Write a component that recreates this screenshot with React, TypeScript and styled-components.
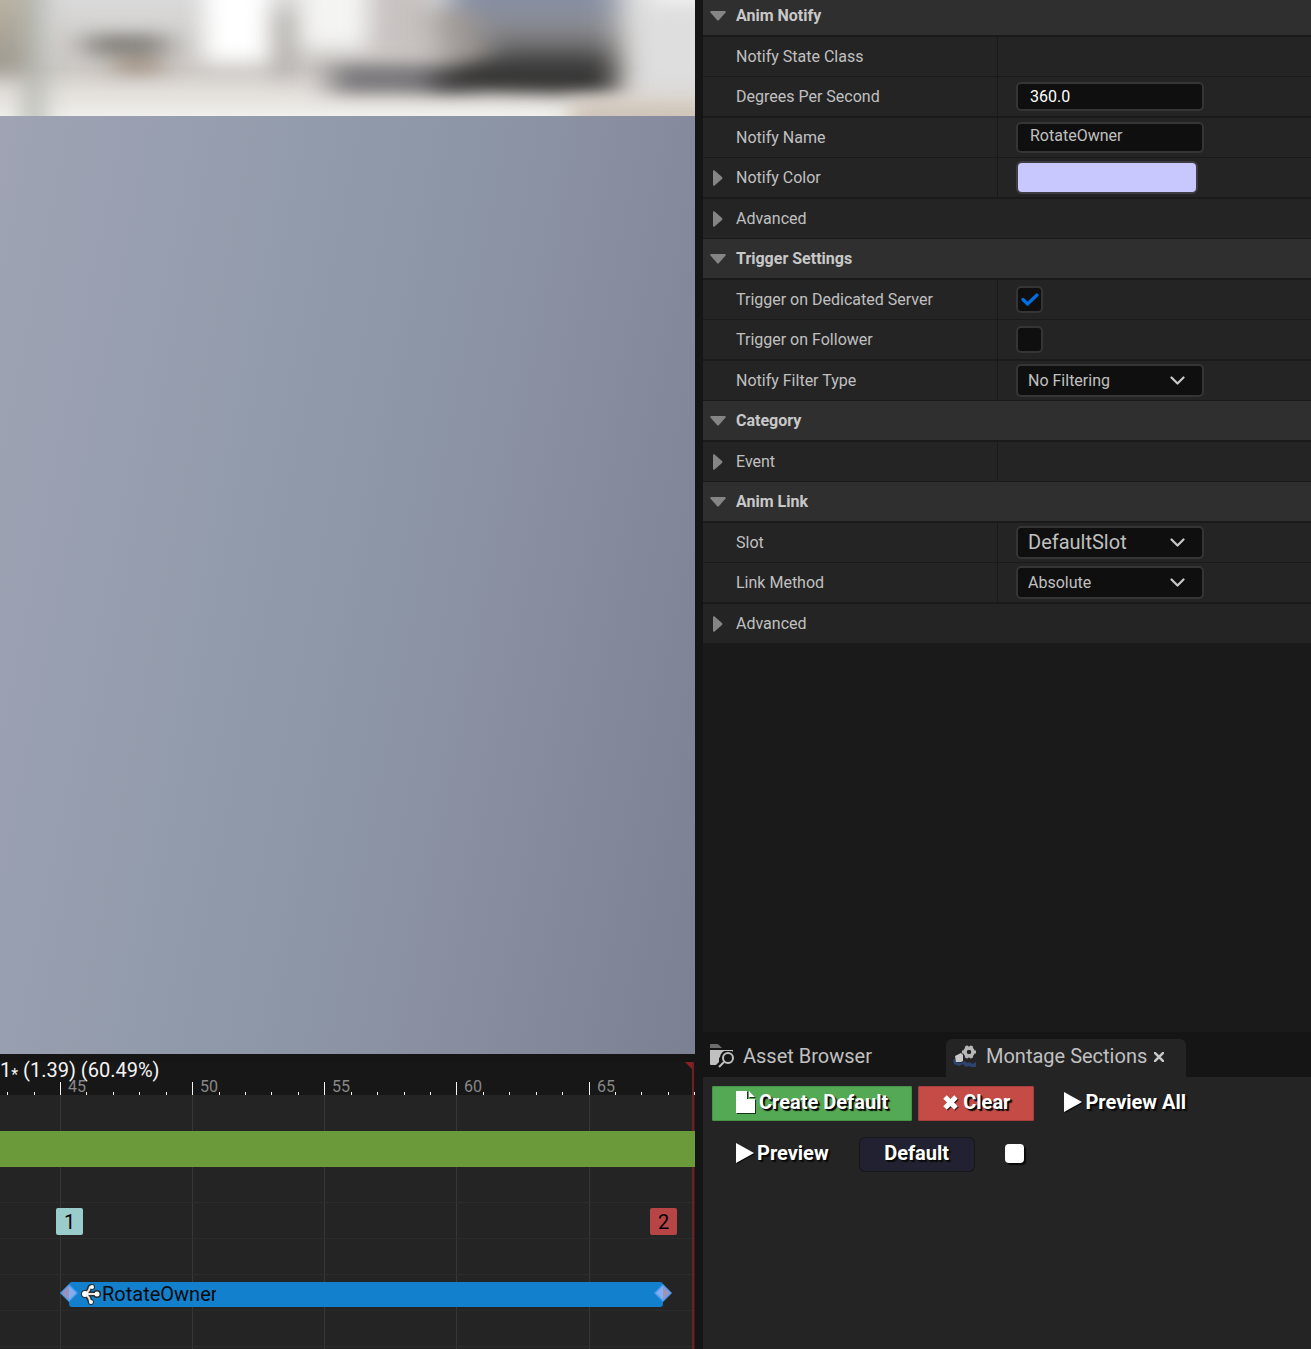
import React, { useId } from "react";
import styled, { createGlobalStyle, css } from "styled-components";

const color = {
  window: "#151515",
  well: "#1a1a1a",
  panel: "#242424",
  header: "#2f2f2f",
  field: "#0f0f0f",
  outline: "#353535",
  text: "#c0c0c0",
};

const GlobalStyle = createGlobalStyle`
  * { box-sizing: border-box; }
  body { margin: 0; background: ${color.window}; }
  body, button, input, select { font-family: Roboto, "Liberation Sans", sans-serif; }
  button { border: 0; margin: 0; padding: 0; background: none; color: inherit; font-size: inherit; cursor: pointer; }
  svg { display: block; flex: none; }
`;

const Editor = styled.main`
  display: grid;
  grid-template-columns: minmax(0, 1fr) 608px;
  column-gap: 8px;
  min-height: 100vh;
  color: ${color.text};
`;

const Column = styled.div`
  display: flex;
  flex-direction: column;
  min-width: 0;
`;

/* ---------- viewport ---------- */

const Viewport = styled.section`
  flex: 1;
  display: flex;
  flex-direction: column;
`;

const Horizon = styled.svg`
  width: 100%;
  height: 116px;
`;

const Floor = styled.div`
  flex: 1;
  background: linear-gradient(101deg, #9fa3b4 0%, #989fb0 20%, #8e98a8 48%, #898fa1 70%, #7b8093 100%);
`;

function Backdrop() {
  return (
    <Horizon viewBox="0 0 695 116" preserveAspectRatio="none" aria-hidden="true">
      <defs>
        <filter id="soft" colorInterpolationFilters="sRGB" filterUnits="userSpaceOnUse" x="-80" y="-80" width="860" height="280">
          <feGaussianBlur stdDeviation="12 10" />
        </filter>
        <filter id="softer" colorInterpolationFilters="sRGB" filterUnits="userSpaceOnUse" x="-80" y="-80" width="860" height="280">
          <feGaussianBlur stdDeviation="16 8" />
        </filter>
        <linearGradient id="ground" x1="0" y1="0" x2="0" y2="1">
          <stop offset="0" stopColor="#d9d9d9" />
          <stop offset="0.6" stopColor="#cdc9c5" />
          <stop offset="0.8" stopColor="#e3dfdb" />
          <stop offset="1" stopColor="#f0efeb" />
        </linearGradient>
        <linearGradient id="vehicle" gradientUnits="userSpaceOnUse" x1="0" y1="0" x2="0" y2="90">
          <stop offset="0" stopColor="#878fa3" />
          <stop offset="0.3" stopColor="#8a8b91" />
          <stop offset="0.52" stopColor="#6c6b6c" />
          <stop offset="0.72" stopColor="#3c3c3c" />
          <stop offset="1" stopColor="#343332" />
        </linearGradient>
        <linearGradient id="post" x1="0" y1="0" x2="0" y2="1">
          <stop offset="0" stopColor="#d0c9b4" />
          <stop offset="1" stopColor="#9b958c" />
        </linearGradient>
      </defs>
      <rect width="695" height="116" fill="url(#ground)" />
      <g filter="url(#soft)">
        <rect x="-80" y="-60" width="106" height="134" fill="url(#post)" />
        <rect x="24" y="-60" width="20" height="240" fill="#b4b7b0" />
        <rect x="204" y="-60" width="66" height="122" fill="#ffffff" />
        <rect x="274" y="10" width="20" height="66" fill="#b0aca8" />
        <rect x="300" y="-60" width="66" height="108" fill="#f4f4f2" />
        <rect x="374" y="-60" width="56" height="118" fill="#c8c2c1" />
      </g>
      <g filter="url(#softer)">
        <rect x="86" y="34" width="80" height="22" fill="#85827d" />
        <rect x="116" y="58" width="44" height="16" fill="#a09080" />
        <rect x="330" y="64" width="140" height="30" fill="#7c797d" />
      </g>
      <g filter="url(#softer)">
        <path d="M448-60H618V94H560L480 92L430 88L450 50Z" fill="url(#vehicle)" />
        <path d="M430 10H470L490 56L440 70Z" fill="#a09a96" />
      </g>
      <g filter="url(#soft)">
        <rect x="636" y="-60" width="140" height="150" fill="#dededf" />
        <rect x="650" y="-60" width="120" height="62" fill="#f6f6f7" />
        <rect x="570" y="100" width="220" height="40" fill="#cdc2b6" />
      </g>
    </Horizon>
  );
}

/* ---------- timeline ---------- */

const PX_PER_FRAME = 26.43;
const frameToX = (frame: number) => Math.round(60 + (frame - 45) * PX_PER_FRAME);

const TimelinePanel = styled.section`
  position: relative;
  overflow: hidden;
  padding: 8px 0 2px;
  background: linear-gradient(${color.window} 8px, ${color.panel} 8px);
`;

const Ruler = styled.div`
  position: relative;
  height: 33px;
  background: #171717;
`;

const Scrub = styled.output`
  display: block;
  font-size: 20px;
  line-height: 16px;
  color: #f4f4f4;
`;

const Star = styled.span`
  font-size: 16px;
  line-height: 8px;
  vertical-align: -3px;
`;

const Tick = styled.i<{ $major: boolean }>`
  position: absolute;
  bottom: 0;
  width: 1px;
  height: ${(p) => (p.$major ? 13 : 3)}px;
  background: #f4f4f4;
`;

const TickLabel = styled.span`
  position: absolute;
  top: 16px;
  margin-left: 8px;
  font-size: 16px;
  line-height: 18px;
  color: #888;
`;

const Tracks = styled.div`
  position: relative;
`;

const GridLine = styled.i`
  position: absolute;
  top: 0;
  bottom: -2px;
  width: 1px;
  background: #373737;
`;

const Track = styled.div<{ $ruled?: boolean }>`
  position: relative;
  height: 36px;
  border-bottom: 1px solid ${(p) => (p.$ruled ? "#2b2b2b" : "transparent")};
`;

const Segment = styled.div`
  position: relative;
  z-index: 2;
  height: 36px;
  background: #6b9a3a;
`;

const Marker = styled.button<{ $fill: string }>`
  position: absolute;
  top: 5px;
  width: 27px;
  height: 27px;
  margin-left: -13px;
  padding-top: 1px;
  border-radius: 2px;
  background: ${(p) => p.$fill};
  color: #000;
  font-size: 20px;
  line-height: 26px;
`;

const NotifyState = styled.div`
  position: absolute;
  top: 7px;
  display: flex;
  align-items: center;
  height: 25px;
  padding-left: 12px;
  border-radius: 3px;
  background: #1280cc;
  color: #0a0a0a;
  font-size: 20px;
  line-height: 25px;
`;

const StateName = styled.span`
  width: 114px;
  margin-left: 1px;
  overflow: hidden;
  white-space: nowrap;
`;

const Handle = styled.svg<{ $end?: boolean }>`
  position: absolute;
  top: 2px;
  ${(p) => (p.$end ? "right: -9px;" : "left: -9px;")}
`;

const Playhead = styled.svg`
  position: absolute;
  top: 8px;
  bottom: 0;
  z-index: 1;
  width: 10px;
  height: 290px;
  margin-left: -8px;
`;

const majors = [45, 50, 55, 60, 65];
const frames = Array.from({ length: 27 }, (_, i) => 43 + i);

function Diamond({ end }: { end?: boolean }) {
  return (
    <Handle $end={end} width="18" height="18" viewBox="0 0 18 18" aria-hidden="true">
      <path d="M9 0L18 9L9 18L0 9Z" fill="#4a9df0" />
      <path d="M9 2V16L2 9Z" fill={end ? "#84aef0" : "#9a94bd"} />
      <path d="M9 2V16L16 9Z" fill={end ? "#9a94bd" : "#84aef0"} />
    </Handle>
  );
}

function BranchIcon() {
  const lines = "M4 10H17M4 10Q8 8 9 3M4 10Q8 12 9 17";
  return (
    <svg width="20" height="22" viewBox="0 0 20 22" fill="none" aria-hidden="true">
      <path d={lines} stroke="#2a2f33" strokeWidth="5" strokeLinecap="round" />
      <g fill="#2a2f33">
        <circle cx="4" cy="10" r="4" />
        <circle cx="11" cy="3" r="3" />
        <circle cx="10" cy="18" r="3" />
        <circle cx="16" cy="10" r="4" />
      </g>
      <path d={lines} stroke="#e9e6e0" strokeWidth="2" strokeLinecap="round" />
      <g fill="#fff">
        <circle cx="4" cy="10" r="3" />
        <circle cx="11" cy="3" r="2" />
        <circle cx="10" cy="18" r="2" />
        <circle cx="16" cy="10" r="2.5" />
      </g>
    </svg>
  );
}

function Timeline() {
  const start = frameToX(45.34);
  const end = frameToX(67.8);
  return (
    <TimelinePanel aria-label="Timeline">
      <Ruler>
        <Scrub>1<Star>*</Star> (1.39) (60.49%)</Scrub>
        {frames.map((f) => (
          <Tick key={f} $major={f % 5 === 0} style={{ left: frameToX(f) }} />
        ))}
        {majors.map((f) => (
          <TickLabel key={f} style={{ left: frameToX(f) }}>{f}</TickLabel>
        ))}
      </Ruler>
      <Tracks>
        {majors.map((f) => (
          <GridLine key={f} style={{ left: frameToX(f) }} />
        ))}
        <Track />
        <Segment />
        <Track $ruled />
        <Track $ruled>
          <Marker $fill="#9acccb" style={{ left: frameToX(45.34) }}>1</Marker>
          <Marker $fill="#b84545" style={{ left: frameToX(67.8) }}>2</Marker>
        </Track>
        <Track $ruled />
        <Track $ruled>
          <NotifyState style={{ left: start, width: end - start }}>
            <Diamond />
            <BranchIcon />
            <StateName>RotateOwner</StateName>
            <Diamond end />
          </NotifyState>
        </Track>
        <Track $ruled />
      </Tracks>
      <Playhead style={{ left: frameToX(68.96) }} aria-hidden="true">
        <path d="M0 0H9V8H8Z" fill="#8a2024" />
        <rect x="7" width="2" height="290" fill="#6c2022" />
      </Playhead>
    </TimelinePanel>
  );
}

/* ---------- details ---------- */

const Details = styled.section`
  flex: 1;
  background: ${color.well};
`;

const lineStyle = css`
  height: 40px;
  border-bottom: 1px solid ${color.well};
  &:nth-child(odd) {
    height: 41px;
    border-bottom-width: 2px;
  }
`;

const Category = styled.h2`
  ${lineStyle}
  margin: 0;
  background: ${color.header};
  font-size: 16px;
  font-weight: 700;
  color: #c8c8c8;
  &:first-child {
    height: 37px;
    padding-bottom: 4px;
  }
`;

const Toggle = styled.button<{ $open?: boolean }>`
  display: grid;
  grid-template-columns: 30px 1fr;
  align-items: center;
  gap: 3px;
  width: 100%;
  height: 100%;
  font-weight: inherit;
  line-height: 20px;
  text-align: left;
  svg { justify-self: center; }
`;

const Property = styled.div<{ $wide?: boolean }>`
  ${lineStyle}
  display: grid;
  grid-template-columns: ${(p) => (p.$wide ? "1fr" : "295px 1fr")};
  background: ${color.panel};
  font-size: 16px;
`;

const NameCell = styled.div<{ $ruled?: boolean }>`
  display: flex;
  align-items: center;
  ${(p) => p.$ruled && `border-right: 1px solid ${color.well};`}
`;

const Name = styled.label`
  padding-left: 33px;
  line-height: 20px;
`;

const ValueCell = styled.div`
  display: flex;
  align-items: center;
  padding-left: 18px;
`;

const fieldStyle = css`
  border: 2px solid ${color.outline};
  border-radius: 5px;
  background: ${color.field};
`;

const TextField = styled.input<{ $tall?: boolean }>`
  ${fieldStyle}
  width: 188px;
  height: ${(p) => (p.$tall ? 31 : 29)}px;
  padding: ${(p) => (p.$tall ? "0 12px 4px" : "0 12px")};
  font-size: 16px;
  color: ${(p) => (p.$tall ? color.text : "#fff")};
`;

const Swatch = styled.input`
  width: 182px;
  height: 33px;
  padding: 0;
  border: 0;
  background: none;
  &::-webkit-color-swatch-wrapper { padding: 0; }
  &::-webkit-color-swatch { border: 2px solid #3d3d42; border-radius: 6px; }
`;

const CheckBoxFrame = styled.span`
  position: relative;
  display: flex;
`;

const CheckBox = styled.input`
  ${fieldStyle}
  appearance: none;
  width: 27px;
  height: 27px;
  margin: 0;
  & + svg { position: absolute; left: 5px; top: 7px; pointer-events: none; visibility: hidden; }
  &:checked + svg { visibility: visible; }
`;

const SelectFrame = styled.span`
  position: relative;
  display: flex;
  svg { position: absolute; right: 19px; top: 12px; pointer-events: none; }
`;

const SelectBox = styled.select<{ $large?: boolean }>`
  ${fieldStyle}
  appearance: none;
  width: 188px;
  height: 33px;
  padding: ${(p) => (p.$large ? "0 40px 2px 10px" : "0 40px 0 10px")};
  font-size: ${(p) => (p.$large ? 20 : 16)}px;
  color: ${color.text};
`;

function Arrow({ open }: { open?: boolean }) {
  return open ? (
    <svg width="16" height="10" viewBox="0 0 16 10" aria-hidden="true">
      <path d="M1 0H15L16 1L9 9Q8 10 7 9L0 1Z" fill="#858585" />
    </svg>
  ) : (
    <svg width="10" height="16" viewBox="0 0 10 16" aria-hidden="true">
      <path d="M0 1L1 0L9 7Q10 8 9 9L1 16L0 15Z" fill="#858585" />
    </svg>
  );
}

function Heading({ children }: { children: string }) {
  return (
    <Category>
      <Toggle aria-expanded="true"><Arrow open />{children}</Toggle>
    </Category>
  );
}

function Field({ name, expandable, wide, children }: {
  name: string; expandable?: boolean; wide?: boolean; children?: (id: string) => React.ReactNode;
}) {
  const id = useId();
  return (
    <Property $wide={wide}>
      <NameCell $ruled={!wide}>
        {expandable ? (
          <Toggle aria-expanded="false"><Arrow />{name}</Toggle>
        ) : (
          <Name as={children ? "label" : "span"} htmlFor={children ? id : undefined}>{name}</Name>
        )}
      </NameCell>
      {!wide && <ValueCell>{children?.(id)}</ValueCell>}
    </Property>
  );
}

function Check({ id, checked }: { id: string; checked?: boolean }) {
  return (
    <CheckBoxFrame>
      <CheckBox id={id} type="checkbox" defaultChecked={checked} />
      <svg width="18" height="13" viewBox="0 0 18 13" fill="none" aria-hidden="true">
        <path d="M2 6.500L6.500 11L16 2" stroke="#0070e0" strokeWidth="3.200" strokeLinecap="round" strokeLinejoin="round" />
      </svg>
    </CheckBoxFrame>
  );
}

function Dropdown({ id, value, large }: { id: string; value: string; large?: boolean }) {
  return (
    <SelectFrame>
      <SelectBox id={id} $large={large}><option>{value}</option></SelectBox>
      <svg width="15" height="10" viewBox="0 0 15 10" fill="none" aria-hidden="true">
        <path d="M1.500 1.500L7.500 7.500L13.500 1.500" stroke="#c8c8c8" strokeWidth="2.200" strokeLinecap="round" strokeLinejoin="round" />
      </svg>
    </SelectFrame>
  );
}

/* ---------- montage sections ---------- */

const TabBar = styled.nav`
  display: flex;
  align-items: flex-end;
  height: 45px;
  background: ${color.window};
  font-size: 20px;
`;

const Tab = styled.div<{ $active?: boolean }>`
  display: flex;
  align-items: center;
  gap: 7px;
  width: ${(p) => (p.$active ? 240 : 243)}px;
  height: 38px;
  padding: 0 7px 4px;
  border-radius: 6px 6px 0 0;
  background: ${(p) => (p.$active ? color.panel : "transparent")};
`;

const TabButton = styled.button`
  display: flex;
  align-items: center;
  gap: 9px;
  line-height: 24px;
  white-space: nowrap;
`;

const CloseButton = styled.button`
  padding-top: 2px;
`;

const Sections = styled.section`
  display: flex;
  flex-direction: column;
  gap: 16px;
  height: 272px;
  padding: 9px;
  background: ${color.panel};
`;

const Line = styled.div`
  display: flex;
  align-items: center;
  gap: 6px;
  height: 35px;
`;

const Action = styled.button<{ $fill?: string; $edge?: string; $round?: boolean }>`
  display: flex;
  align-items: center;
  justify-content: center;
  gap: ${(p) => (p.$edge ? 4 : 3)}px;
  height: 35px;
  min-width: 116px;
  padding: 0 24px 4px;
  border-radius: ${(p) => (p.$round ? 6 : 2)}px;
  background: ${(p) => p.$fill ?? "none"};
  ${(p) => p.$edge && `box-shadow: inset 0 0 0 1px ${p.$edge};`}
  color: #fff;
  font-size: 20px;
  font-weight: 700;
  line-height: 24px;
  text-shadow: 1px 1px 0 #0a0a0a, 2px 2px 1px #0a0a0a;
  white-space: nowrap;
  svg { margin-top: 1px; filter: drop-shadow(1px 1px 0 rgba(0, 0, 0, 0.7)); }
`;

const LoopBox = styled.input`
  appearance: none;
  width: 19px;
  height: 19px;
  margin: 0 0 2px 24px;
  border-radius: 4px;
  background: #fff;
  box-shadow: 2px 2px 1px #0a0a0a;
`;

function FolderSearchIcon() {
  return (
    <svg width="24" height="24" viewBox="0 0 24 24" aria-hidden="true">
      <path d="M0 4V1Q0 0 1 0H7Q8 0 9 1L12 4Z" fill="#6d6d6d" />
      <path d="M0 6H23V8H15L9 14V18L6 21H1Q0 21 0 20Z" fill="#c0c0c0" />
      <circle cx="18" cy="14" r="8" fill={color.window} />
      <path d="M12 19L8 23" stroke={color.window} strokeWidth="5" />
      <path d="M10 6H23V7H10Z" fill="#c0c0c0" />
      <circle cx="18" cy="14" r="5" fill="none" stroke="#c0c0c0" strokeWidth="2" />
      <path d="M14 18L9 23" stroke="#c0c0c0" strokeWidth="2" />
    </svg>
  );
}

function MontageIcon() {
  return (
    <svg width="24" height="24" viewBox="0 0 24 24" aria-hidden="true">
      <path d="M0 16L3 14V18L8 19L12 17L14 19L17 18L19 20L23 18V23H18L16 22L13 23L10 20L6 22L1 20Z" fill="#2e4470" />
      <path d="M2 12L8 9L10 11V17L8 18H3Z" fill="#c8c8c8" />
      <circle cx="16" cy="8" r="4" fill="none" stroke="#b8b8b8" strokeWidth="3.500" />
      <path d="M13 2L15 6M19 2L17 6M9 8H12M20 8H23M13 14L15 10M19 14L17 10" stroke="#b8b8b8" strokeWidth="3" />
      <circle cx="16" cy="8" r="2" fill={color.panel} />
    </svg>
  );
}

const PlayIcon = () => (
  <svg width="18" height="20" viewBox="0 0 18 20" aria-hidden="true">
    <path d="M0 0L18 10L0 20Z" fill="#fff" />
  </svg>
);

const FileIcon = () => (
  <svg width="19" height="22" viewBox="0 0 19 22" aria-hidden="true">
    <path d="M0 0H11V8H19V22H0Z M13 0L19 6H13Z" fill="#fff" />
  </svg>
);

const CrossIcon = () => (
  <svg width="17" height="17" viewBox="0 0 17 17" aria-hidden="true">
    <path d="M3 3L14 14M14 3L3 14" stroke="#fff" strokeWidth="5" />
  </svg>
);

export default function App() {
  return (
    <>
      <GlobalStyle />
      <Editor>
        <Column>
          <Viewport aria-label="Viewport">
            <Backdrop />
            <Floor />
          </Viewport>
          <Timeline />
        </Column>
        <Column>
          <Details aria-label="Details">
            <Heading>Anim Notify</Heading>
            <Field name="Notify State Class" />
            <Field name="Degrees Per Second">{(id) => <TextField id={id} defaultValue="360.0" />}</Field>
            <Field name="Notify Name">{(id) => <TextField id={id} $tall defaultValue="RotateOwner" />}</Field>
            <Field name="Notify Color" expandable>
              {(id) => <Swatch id={id} type="color" aria-label="Notify Color" defaultValue="#c8c8ff" />}
            </Field>
            <Field name="Advanced" expandable wide />
            <Heading>Trigger Settings</Heading>
            <Field name="Trigger on Dedicated Server">{(id) => <Check id={id} checked />}</Field>
            <Field name="Trigger on Follower">{(id) => <Check id={id} />}</Field>
            <Field name="Notify Filter Type">{(id) => <Dropdown id={id} value="No Filtering" />}</Field>
            <Heading>Category</Heading>
            <Field name="Event" expandable />
            <Heading>Anim Link</Heading>
            <Field name="Slot">{(id) => <Dropdown id={id} value="DefaultSlot" large />}</Field>
            <Field name="Link Method">{(id) => <Dropdown id={id} value="Absolute" />}</Field>
            <Field name="Advanced" expandable wide />
          </Details>
          <TabBar aria-label="Panels">
            <Tab>
              <TabButton><FolderSearchIcon />Asset Browser</TabButton>
            </Tab>
            <Tab $active>
              <TabButton><MontageIcon />Montage Sections</TabButton>
              <CloseButton aria-label="Close tab">
                <svg width="10" height="10" viewBox="0 0 10 10" aria-hidden="true">
                  <path d="M0 0L10 10M10 0L0 10" stroke="#c8c8c8" strokeWidth="2.500" />
                </svg>
              </CloseButton>
            </Tab>
          </TabBar>
          <Sections aria-label="Montage Sections">
            <Line>
              <Action $fill="#54a954" $edge="#469246"><FileIcon />Create Default</Action>
              <Action $fill="#c54b47" $edge="#a63f3c"><CrossIcon />Clear</Action>
              <Action><PlayIcon />Preview All</Action>
            </Line>
            <Line>
              <Action><PlayIcon />Preview</Action>
              <Action $fill="#222131" $edge="#171717" $round>Default</Action>
              <LoopBox type="checkbox" aria-label="Loop section" />
            </Line>
          </Sections>
        </Column>
      </Editor>
    </>
  );
}
